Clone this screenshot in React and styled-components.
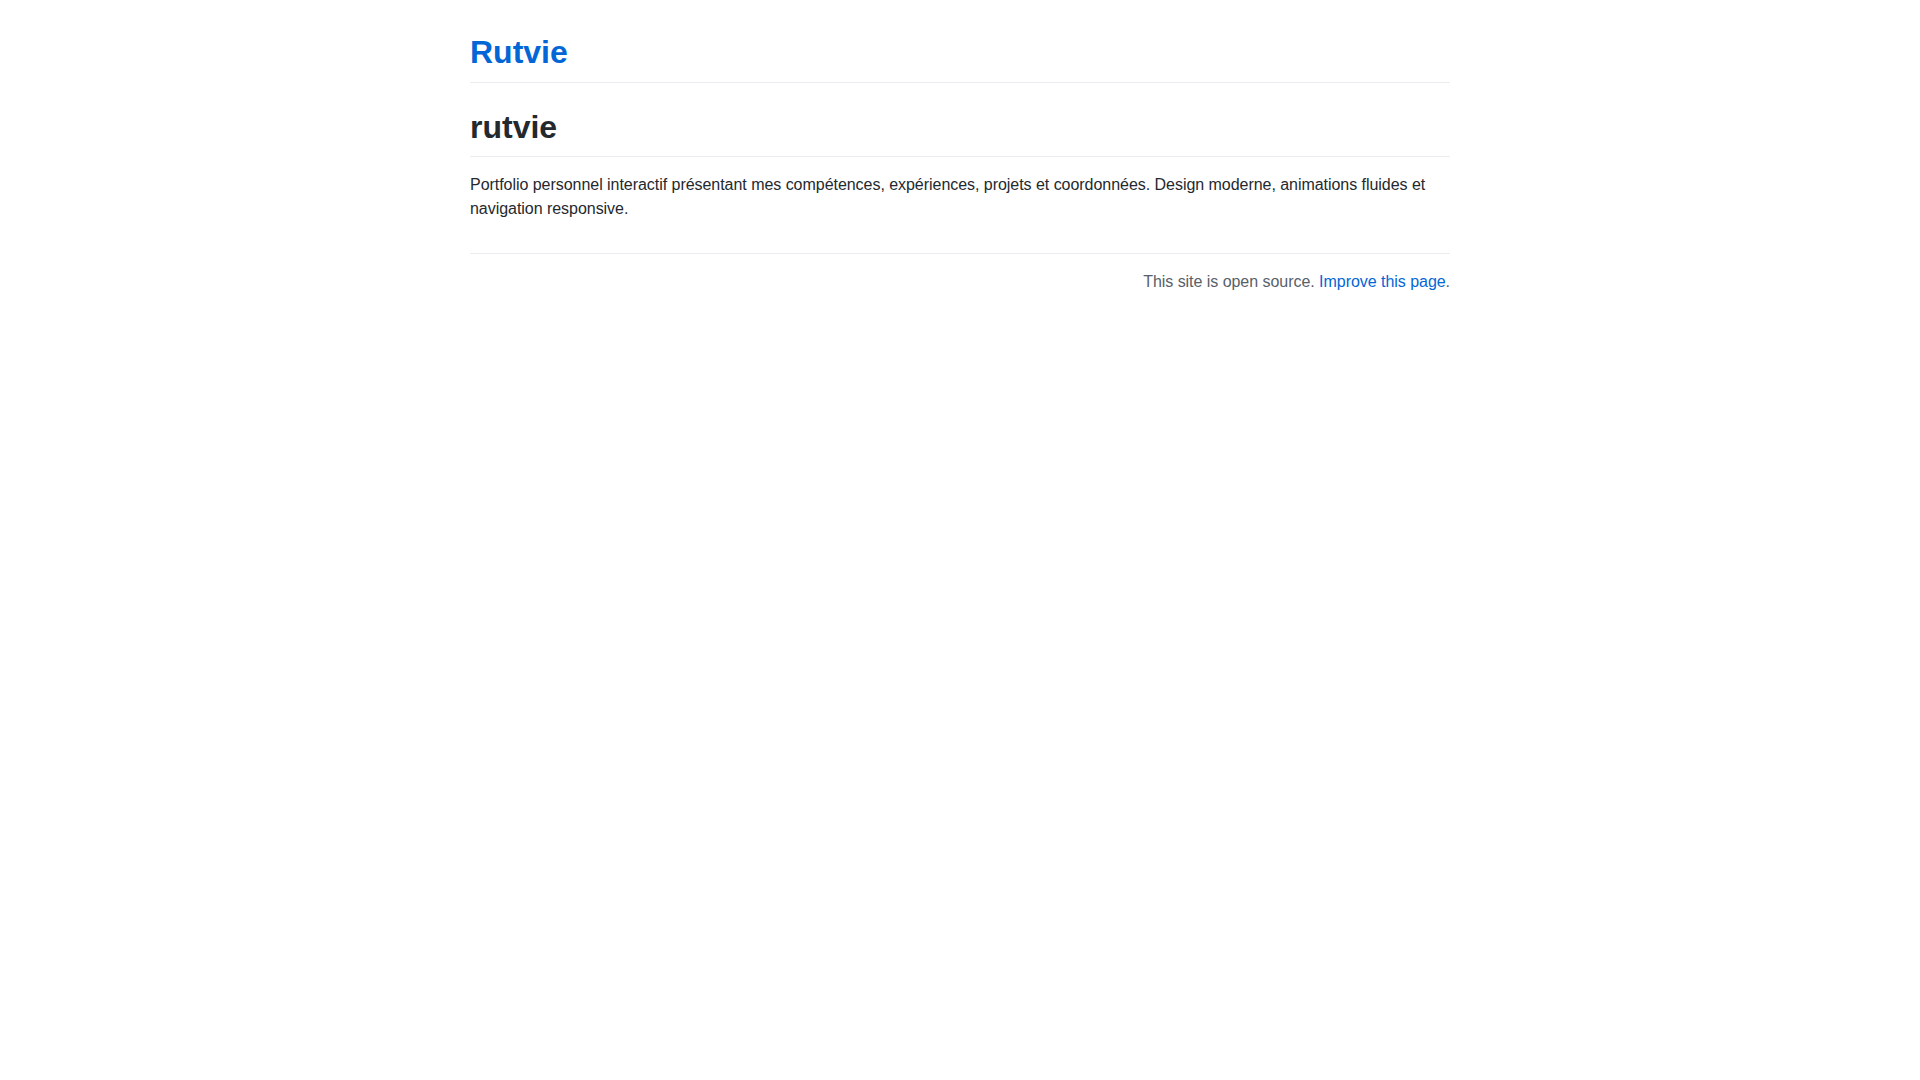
import React from "react";
import styled, { createGlobalStyle } from "styled-components";

const GlobalStyle = createGlobalStyle`
  html, body {
    margin: 0;
    padding: 0;
    background: #fff;
  }
  body {
    font-family: "Liberation Sans", Helvetica, Arial, sans-serif;
    font-size: 16px;
    line-height: 1.5;
    color: #24292e;
  }
`;

const Contenedor = styled.div`
  max-width: 1012px;
  margin: 32px auto;
  padding: 0 16px;
  box-sizing: border-box;
`;

const Titulo = styled.h1`
  font-size: 32px;
  font-weight: 600;
  line-height: 1.25;
  margin: ${(p) => (p.$first ? "0" : "24px")} 0 16px;
  padding-bottom: 0.3em;
  border-bottom: 1px solid #eaecef;

  a {
    color: #0366d6;
    text-decoration: none;
  }
`;

const Parrafo = styled.p`
  margin: 0 0 16px;
  letter-spacing: -0.04px;
`;

const Pie = styled.div`
  margin-top: 32px;
  padding-top: 16px;
  border-top: 1px solid #eaecef;
  text-align: right;
  color: #586069;
  letter-spacing: -0.04px;

  a {
    color: #0366d6;
    text-decoration: none;
  }
`;

const App = () => {
  return (
    <>
      <GlobalStyle />
      <Contenedor>
        <Titulo $first>
          <a href="#">Rutvie</a>
        </Titulo>
        <Titulo>rutvie</Titulo>
        <Parrafo>
          Portfolio personnel interactif présentant mes compétences,
          expériences, projets et coordonnées. Design moderne, animations
          fluides et navigation responsive.
        </Parrafo>
        <Pie>
          This site is open source. <a href="#">Improve this page</a>.
        </Pie>
      </Contenedor>
    </>
  );
};

export default App;
